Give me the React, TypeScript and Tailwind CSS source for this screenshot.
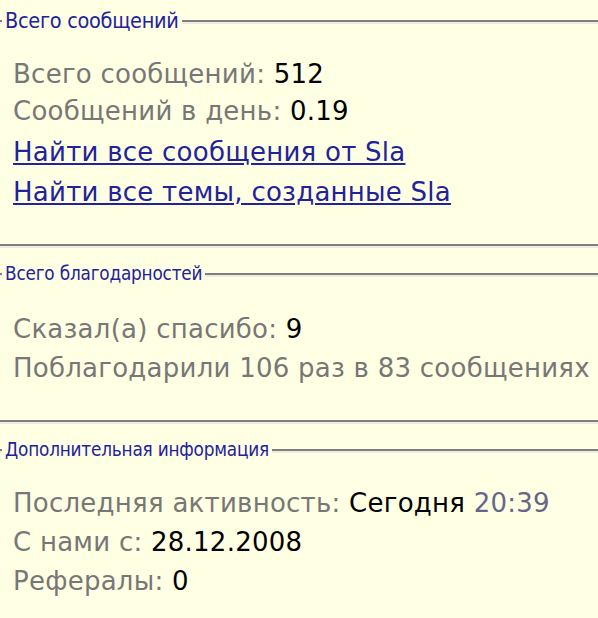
import React from "react";

const legendBase =
  "ml-[2px] px-[3px] text-[#22229c] bg-[#ffffe4] [font-family:'DejaVu_Sans_Condensed','DejaVu_Sans',sans-serif]";
const legendBig = legendBase + " text-[21.5px] leading-[24px] tracking-[-0.3px]";
const legendSmall = legendBase + " text-[18.8px] leading-[22px] tracking-[-0.2px]";

function Row({ h, children }: { h: string; children: React.ReactNode }) {
  return <div className={h + " whitespace-nowrap pl-[13px]"}>{children}</div>;
}

export default function App() {
  return (
    <div className="min-h-[618px] w-[598px] bg-[#ffffe4] text-[#777777] text-[26px] tracking-[0.25px] [font-family:'DejaVu_Sans',Verdana,sans-serif] pt-[9px] overflow-hidden">
      <fieldset className="border-t-2 border-b-2 border-[#7f7f7f] shadow-[inset_0_2px_0_#ecece0,0_2px_0_#ecece0]">
        <legend className={legendBig}>Всего сообщений</legend>
        <div className="pt-[22px] pb-[32px]">
          <Row h="h-[37px] leading-[39px]">
            Всего сообщений: <span className="text-black">512</span>
          </Row>
          <Row h="h-[41px] leading-[39px]">
            Сообщений в день: <span className="text-black">0.19</span>
          </Row>
          <Row h="h-[40px] leading-[39px]">
            <a href="#" className="text-[#22229c] underline">Найти все сообщения от Sla</a>
          </Row>
          <Row h="h-[39px] leading-[39px]">
            <a href="#" className="text-[#22229c] underline">Найти все темы, созданные Sla</a>
          </Row>
        </div>
      </fieldset>
      <fieldset className="mt-[17px] border-t-2 border-b-2 border-[#7f7f7f] shadow-[inset_0_2px_0_#ecece0,0_2px_0_#ecece0]">
        <legend className={legendSmall}>Всего благодарностей</legend>
        <div className="pt-[25px] pb-[32px]">
          <Row h="h-[39px] leading-[39px]">
            Сказал(а) спасибо: <span className="text-black">9</span>
          </Row>
          <Row h="h-[39px] leading-[39px]">Поблагодарили 106 раз в 83 сообщениях</Row>
        </div>
      </fieldset>
      <fieldset className="mt-[17px] border-t-2 border-[#7f7f7f] shadow-[inset_0_2px_0_#ecece0]">
        <legend className={legendSmall}>Дополнительная информация</legend>
        <div className="pt-[23px]">
          <Row h="h-[39px] leading-[39px]">
            Последняя активность: <span className="text-black">Сегодня</span>{" "}
            <span className="text-[#66668a]">20:39</span>
          </Row>
          <Row h="h-[39px] leading-[39px]">
            С нами с: <span className="text-black">28.12.2008</span>
          </Row>
          <Row h="h-[39px] leading-[39px]">
            Рефералы: <span className="text-black">0</span>
          </Row>
        </div>
      </fieldset>
    </div>
  );
}
